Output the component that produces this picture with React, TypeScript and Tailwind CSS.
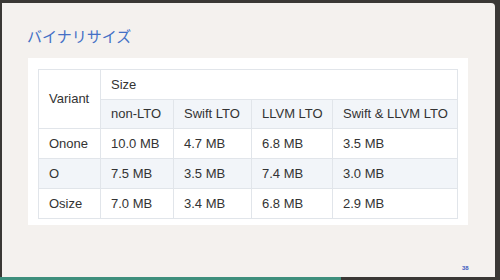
const rows = [
  { v: "Onone", c: ["10.0 MB", "4.7 MB", "6.8 MB", "3.5 MB"], alt: false },
  { v: "O", c: ["7.5 MB", "3.5 MB", "7.4 MB", "3.0 MB"], alt: true },
  { v: "Osize", c: ["7.0 MB", "3.4 MB", "6.8 MB", "2.9 MB"], alt: false },
];

const cell = "border border-[#e1e5ea] px-[10px] text-left font-normal align-middle whitespace-nowrap";

export default function App() {
  return (
    <div className="w-[500px] h-[280px] bg-[#3a3835] flex flex-col overflow-hidden" style={{ fontFamily: '"Liberation Sans", Arial, sans-serif' }}>
      <div className="flex-1 mt-[3px] ml-[2px] mr-[5px] bg-[#f4f1ee] rounded-tr-[4px] relative flex flex-col">
        <h1
          className="ml-[25px] mt-[22px] text-[15px] leading-[22px] text-[#4470c6]"
          style={{ fontFamily: '"Noto Sans CJK JP", sans-serif' }}
        >
          バイナリサイズ
        </h1>
        <div className="ml-[26px] mt-[11px] w-[440px] bg-white pt-[11px] pl-[10px] pr-[11px] pb-[6px]">
          <table className="border-collapse text-[13px] leading-[16px] text-[#333] w-[419px] table-fixed">
            <colgroup>
              <col className="w-[62px]" />
              <col className="w-[73px]" />
              <col className="w-[78px]" />
              <col className="w-[81px]" />
              <col className="w-[125px]" />
            </colgroup>
            <thead>
              <tr className="h-[30px]">
                <th rowSpan={2} className={cell}>Variant</th>
                <th colSpan={4} className={cell}>Size</th>
              </tr>
              <tr className="h-[29px] bg-[#f2f5f9]">
                <th className={cell}>non-LTO</th>
                <th className={cell}>Swift LTO</th>
                <th className={cell}>LLVM LTO</th>
                <th className={cell}>Swift &amp; LLVM LTO</th>
              </tr>
            </thead>
            <tbody>
              {rows.map((r) => (
                <tr key={r.v} className={"h-[30px] " + (r.alt ? "bg-[#f2f5f9]" : "bg-white")}>
                  <td className={cell}>{r.v}</td>
                  {r.c.map((x, i) => (
                    <td key={i} className={cell}>{x}</td>
                  ))}
                </tr>
              ))}
            </tbody>
          </table>
        </div>
        <span className="absolute left-[460px] top-[261px] text-[6px] font-bold text-[#3b5bc0]">38</span>
      </div>
      <div className="h-[3px] flex">
        <div className="w-[341px] bg-[#3e8f7c]" />
      </div>
    </div>
  );
}
